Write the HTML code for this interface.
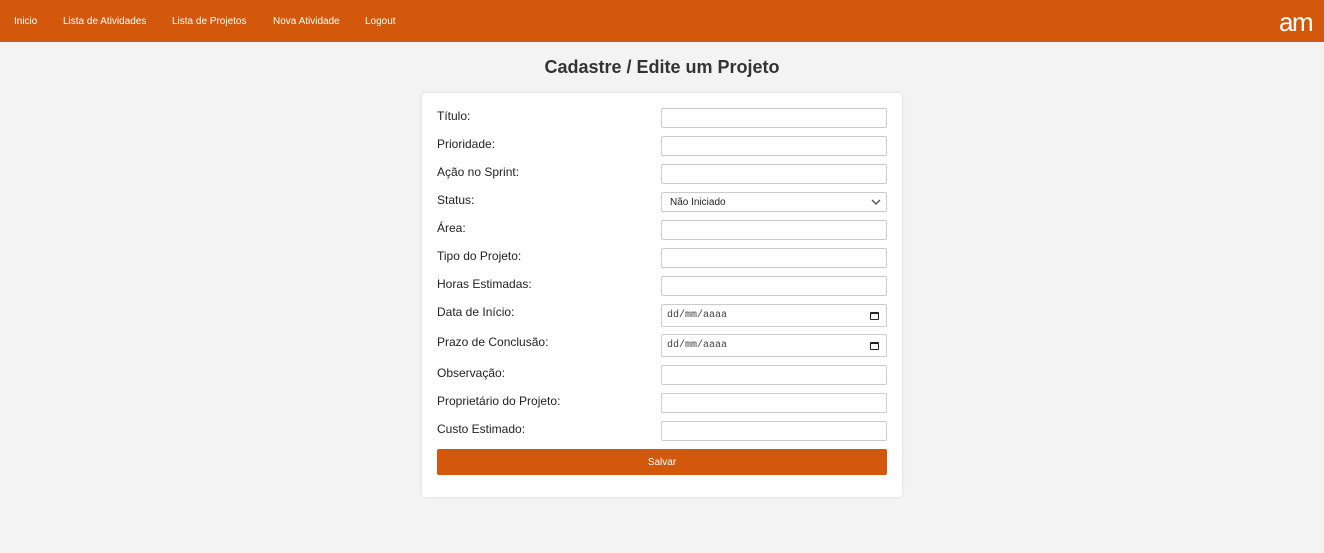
<!DOCTYPE html>
<html><head><meta charset="utf-8"><style>
*{box-sizing:border-box;margin:0;padding:0}
body{width:1324px;height:553px;background:#f3f3f3;font-family:"Liberation Sans",Arial,sans-serif;position:relative;overflow:hidden}
.nav{position:absolute;left:0;top:0;width:1324px;height:42px;background:#d3580b}
.nav a{position:absolute;top:16px;color:#fff;font-size:10px;text-decoration:none}
.logo{position:absolute;left:1279px;top:7px;color:#fff;font-size:26px;font-weight:normal;letter-spacing:-1.5px;line-height:30px}
h1{position:absolute;top:57px;left:0;width:1324px;text-align:center;font-size:18px;color:#333;font-weight:bold}
.card{position:absolute;left:422px;top:93px;width:480px;height:404px;background:#fff;border-radius:4px;box-shadow:0 0 3px rgba(0,0,0,.12)}
.l{position:absolute;left:437px;font-size:12px;color:#222;margin-top:1px}
.i{position:absolute;left:661px;width:226px;height:20px;border:1px solid #ccc;border-radius:2px;background:#fff;font-size:10px;color:#222;padding-left:8px;line-height:19px}
.d{height:23px;line-height:21px;padding-left:5px;font-family:"Liberation Mono",monospace;color:#444}
.btn{position:absolute;left:437px;top:449px;width:450px;height:26px;background:#d3580b;border-radius:2px;color:#fff;font-size:10px;text-align:center;line-height:28px}
</style></head><body>
<div class="nav">
<a style="left:14px">Inicio</a><a style="left:63px">Lista de Atividades</a><a style="left:172px">Lista de Projetos</a><a style="left:273px">Nova Atividade</a><a style="left:365px">Logout</a>
<div class="logo">am</div>
</div>
<h1>Cadastre / Edite um Projeto</h1>
<div class="card"></div>
<div class="l" style="top:108px">Título:</div><div class="i" style="top:108px"></div>
<div class="l" style="top:136px">Prioridade:</div><div class="i" style="top:136px"></div>
<div class="l" style="top:164px">Ação no Sprint:</div><div class="i" style="top:164px"></div>
<div class="l" style="top:192px">Status:</div><div class="i" style="top:192px">Não Iniciado<svg style="position:absolute;right:5px;top:6px" width="10" height="7" viewBox="0 0 10 7"><path d="M1 1l4 4 4-4" fill="none" stroke="#555" stroke-width="1.4"/></svg></div>
<div class="l" style="top:220px">Área:</div><div class="i" style="top:220px"></div>
<div class="l" style="top:248px">Tipo do Projeto:</div><div class="i" style="top:248px"></div>
<div class="l" style="top:276px">Horas Estimadas:</div><div class="i" style="top:276px"></div>
<div class="l" style="top:304px">Data de Início:</div><div class="i d" style="top:304px">dd/mm/aaaa<span style="position:absolute;right:7px;top:7px;width:9px;height:8px;border:1.5px solid #222;border-top-width:2.5px;border-radius:1px"></span></div>
<div class="l" style="top:334px">Prazo de Conclusão:</div><div class="i d" style="top:334px">dd/mm/aaaa<span style="position:absolute;right:7px;top:7px;width:9px;height:8px;border:1.5px solid #222;border-top-width:2.5px;border-radius:1px"></span></div>
<div class="l" style="top:365px">Observação:</div><div class="i" style="top:365px"></div>
<div class="l" style="top:393px">Proprietário do Projeto:</div><div class="i" style="top:393px"></div>
<div class="l" style="top:421px">Custo Estimado:</div><div class="i" style="top:421px"></div>
<div class="btn">Salvar</div>
</body></html>
